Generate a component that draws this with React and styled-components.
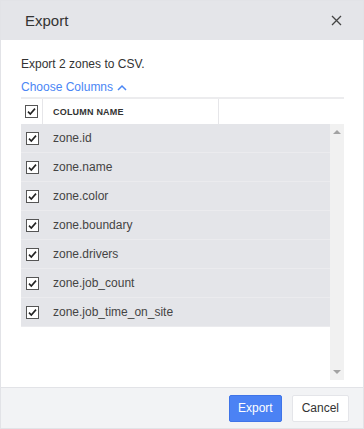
import React from 'react';
import styled, { createGlobalStyle } from 'styled-components';

const Global = createGlobalStyle`
  html, body { margin: 0; padding: 0; background: #fff; }
  body { font-family: "Liberation Sans", Arial, sans-serif; }
  * { box-sizing: border-box; }
`;

const Dialog = styled.div`
  width: 364px;
  height: 429px;
  border: 1px solid #e2e3e7;
  display: flex;
  flex-direction: column;
  background: #fff;
`;

const Header = styled.div`
  height: 39px;
  flex: none;
  background: #e4e5e9;
  display: flex;
  align-items: center;
  justify-content: space-between;
  padding: 0 20px 0 24px;
`;

const Title = styled.div`
  font-size: 15px;
  color: #333;
`;

const Close = styled.button`
  border: 0;
  background: none;
  padding: 0;
  width: 14px;
  height: 14px;
  display: flex;
  align-items: center;
  justify-content: center;
  cursor: pointer;
`;

const Body = styled.div`
  flex: 1;
  padding: 16px 19px 0 20px;
`;

const Intro = styled.div`
  font-size: 12px;
  line-height: 16px;
  color: #333;
`;

const Toggle = styled.div`
  margin-top: 7px;
  font-size: 12px;
  line-height: 16px;
  color: #4a86f5;
  display: flex;
  align-items: center;
  gap: 4px;
`;

const Table = styled.div`
  margin-top: 2px;
  border-top: 2px solid #ececee;
`;

const HeadRow = styled.div`
  display: grid;
  grid-template-columns: 22px 176px 1fr;
  height: 25px;
  align-items: stretch;
`;

const Cell = styled.div`
  display: flex;
  align-items: center;
  justify-content: ${(p) => (p.$center ? 'center' : 'flex-start')};
  padding-left: ${(p) => (p.$center ? '0' : '10px')};
  border-right: ${(p) => (p.$divider ? '1px solid #e6e6e9' : '0')};
  font-size: 9px;
  font-weight: bold;
  color: #333;
  letter-spacing: 0.2px;
`;

const Scroller = styled.div`
  display: flex;
  height: 256px;
`;

const Rows = styled.div`
  flex: 1;
  display: flex;
  flex-direction: column;
`;

const Row = styled.div`
  height: 29px;
  display: flex;
  align-items: center;
  background: #e4e5e9;
  border-bottom: 1px solid #ebebee;
  font-size: 12px;
  color: #444;
`;

const BoxCell = styled.div`
  width: 22px;
  display: flex;
  justify-content: center;
  flex: none;
`;

const Name = styled.div`
  padding-left: 10px;
`;

const Track = styled.div`
  width: 14px;
  flex: none;
  background: #f1f1f1;
  display: flex;
  flex-direction: column;
  justify-content: space-between;
  align-items: center;
  padding: 6px 0 6px;
`;

const Arrow = styled.div`
  width: 0;
  height: 0;
  border-left: 4px solid transparent;
  border-right: 4px solid transparent;
  ${(p) =>
    p.$down
      ? 'border-top: 4px solid #a3a3a3;'
      : 'border-bottom: 4px solid #a3a3a3;'}
`;

const Footer = styled.div`
  height: 41px;
  flex: none;
  background: #f2f3f5;
  border-top: 1px solid #e2e3e7;
  display: flex;
  justify-content: flex-end;
  align-items: center;
  gap: 10px;
  padding: 0 14px 0 0;
`;

const Button = styled.button`
  height: 27px;
  padding: 0 ${(p) => (p.$primary ? '8px' : '9px')};
  border-radius: 2px;
  font-family: "Liberation Sans", Arial, sans-serif;
  font-size: 12px;
  border: 1px solid ${(p) => (p.$primary ? '#3f74e8' : '#e4e5e9')};
  background: ${(p) => (p.$primary ? '#4b82f4' : '#fff')};
  color: ${(p) => (p.$primary ? '#fff' : '#333')};
  cursor: pointer;
`;

const Check = () => (
  <svg width="13" height="13" viewBox="0 0 13 13">
    <rect x="0.5" y="0.5" width="12" height="12" fill="#fff" stroke="#555" />
    <path d="M3 6.6 L5.3 9 L10 3.6" fill="none" stroke="#222" strokeWidth="1.6" />
  </svg>
);

const columns = [
  'zone.id',
  'zone.name',
  'zone.color',
  'zone.boundary',
  'zone.drivers',
  'zone.job_count',
  'zone.job_time_on_site',
];

export default function App() {
  return (
    <>
      <Global />
      <Dialog>
        <Header>
          <Title>Export</Title>
          <Close aria-label="Close">
            <svg width="11" height="11" viewBox="0 0 11 11">
              <path d="M1 1 L10 10 M10 1 L1 10" stroke="#444" strokeWidth="1.3" />
            </svg>
          </Close>
        </Header>
        <Body>
          <Intro>Export 2 zones to CSV.</Intro>
          <Toggle>
            Choose Columns
            <svg width="10" height="7" viewBox="0 0 10 7">
              <path d="M1 6 L5 2 L9 6" fill="none" stroke="#4a86f5" strokeWidth="1.5" />
            </svg>
          </Toggle>
          <Table>
            <HeadRow>
              <Cell $center $divider>
                <Check />
              </Cell>
              <Cell $divider>COLUMN NAME</Cell>
              <Cell />
            </HeadRow>
            <Scroller>
              <Rows>
                {columns.map((c) => (
                  <Row key={c}>
                    <BoxCell>
                      <Check />
                    </BoxCell>
                    <Name>{c}</Name>
                  </Row>
                ))}
              </Rows>
              <Track>
                <Arrow />
                <Arrow $down />
              </Track>
            </Scroller>
          </Table>
        </Body>
        <Footer>
          <Button $primary>Export</Button>
          <Button>Cancel</Button>
        </Footer>
      </Dialog>
    </>
  );
}
